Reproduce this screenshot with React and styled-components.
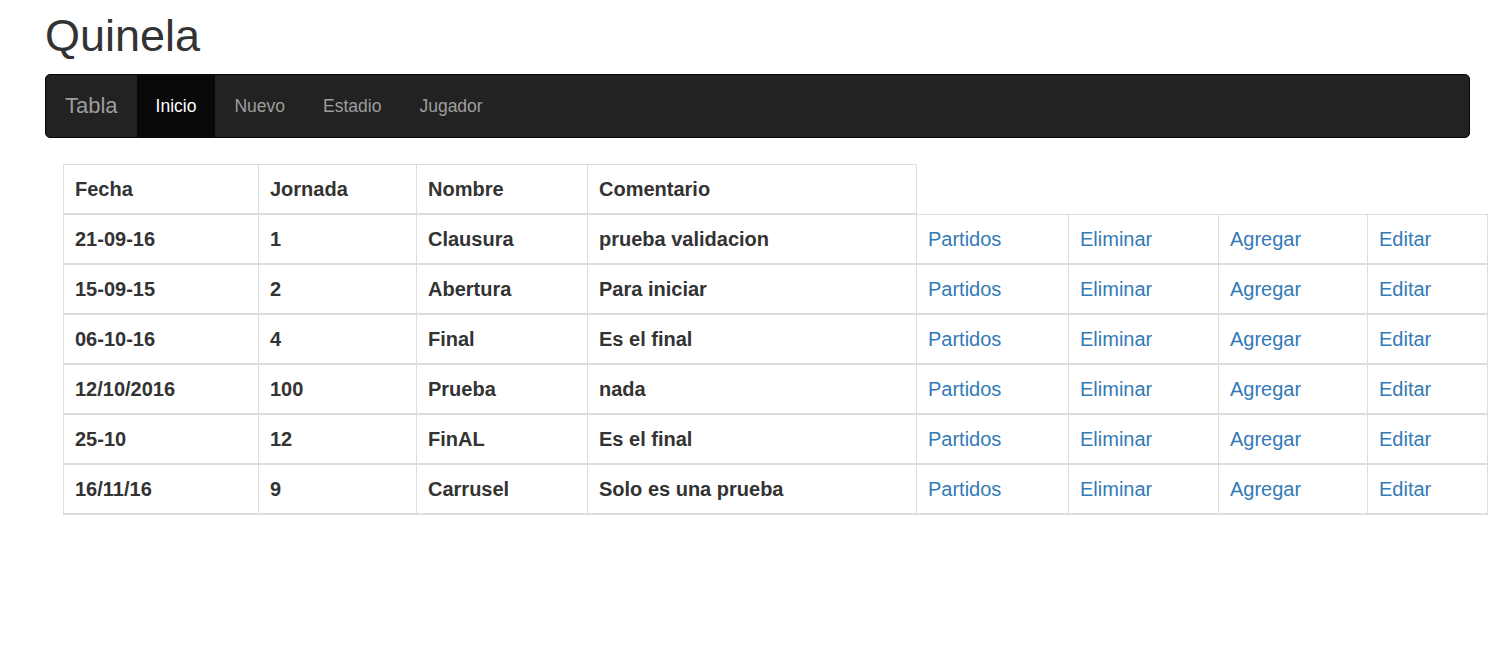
import React from 'react'
import styled, { createGlobalStyle } from 'styled-components'

const GlobalStyle = createGlobalStyle`
  body {
    margin: 0;
    background: #fff;
    color: #333;
    font-family: 'Liberation Sans', Arial, sans-serif;
  }
`

const jornadas = [
  { fecha: '21-09-16', jornada: '1', nombre: 'Clausura', comentario: 'prueba validacion' },
  { fecha: '15-09-15', jornada: '2', nombre: 'Abertura', comentario: 'Para iniciar' },
  { fecha: '06-10-16', jornada: '4', nombre: 'Final', comentario: 'Es el final' },
  { fecha: '12/10/2016', jornada: '100', nombre: 'Prueba', comentario: 'nada' },
  { fecha: '25-10', jornada: '12', nombre: 'FinAL', comentario: 'Es el final' },
  { fecha: '16/11/16', jornada: '9', nombre: 'Carrusel', comentario: 'Solo es una prueba' },
]

const acciones = ['Partidos', 'Eliminar', 'Agregar', 'Editar']
const widths = [195, 158, 171, 329, 152, 150, 149, 120]

const App = () => {
  return (
    <Wrapper>
      <GlobalStyle />
      <Title>Quinela</Title>
      <Navbar>
        <Brand href='#'>Tabla</Brand>
        <NavList>
          <NavItem href='#' $active>
            Inicio
          </NavItem>
          <NavItem href='#'>Nuevo</NavItem>
          <NavItem href='#'>Estadio</NavItem>
          <NavItem href='#'>Jugador</NavItem>
        </NavList>
      </Navbar>
      <Table>
        <colgroup>
          {widths.map((w, i) => (
            <col key={i} style={{ width: w }} />
          ))}
        </colgroup>
        <thead>
          <tr>
            <th>Fecha</th>
            <th>Jornada</th>
            <th>Nombre</th>
            <th>Comentario</th>
          </tr>
        </thead>
        <tbody>
          {jornadas.map((j) => (
            <tr key={j.fecha}>
              <td>{j.fecha}</td>
              <td>{j.jornada}</td>
              <td>{j.nombre}</td>
              <td>{j.comentario}</td>
              {acciones.map((a) => (
                <td key={a}>
                  <ActionLink href='#'>{a}</ActionLink>
                </td>
              ))}
            </tr>
          ))}
        </tbody>
      </Table>
    </Wrapper>
  )
}

const Wrapper = styled.div`
  padding: 11px 0 40px 45px;
`

const Title = styled.h1`
  margin: 0 0 13px 0;
  font-size: 45px;
  line-height: 50px;
  font-weight: 400;
  color: #333;
`

const Navbar = styled.nav`
  display: flex;
  align-items: stretch;
  width: 1425px;
  height: 64px;
  box-sizing: border-box;
  background: #222;
  border: 1px solid #080808;
  border-radius: 5px;
`

const Brand = styled.a`
  display: flex;
  align-items: center;
  padding: 0 19px;
  font-size: 22px;
  color: #9d9d9d;
  text-decoration: none;
`

const NavList = styled.div`
  display: flex;
  align-items: stretch;
`

const NavItem = styled.a`
  display: flex;
  align-items: center;
  padding: 0 19px;
  font-size: 17.5px;
  text-decoration: none;
  color: ${(p) => (p.$active ? '#fff' : '#9d9d9d')};
  background: ${(p) => (p.$active ? '#080808' : 'transparent')};
`

const Table = styled.table`
  margin: 26px 0 0 18px;
  width: 1424px;
  table-layout: fixed;
  border-collapse: collapse;
  border-spacing: 0;
  font-size: 20px;
  line-height: 24px;

  th,
  td {
    padding: 12px 11px;
    text-align: left;
    font-weight: 700;
    color: #333;
    border-left: 1px solid #ddd;
    border-right: 1px solid #ddd;
    white-space: nowrap;
  }

  th {
    border-top: 1px solid #ddd;
    border-bottom: 2px solid #ddd;
  }

  td {
    border-top: 1px solid #ddd;
    border-bottom: 2px solid #ddd;
  }
`

const ActionLink = styled.a`
  font-weight: 400;
  color: #337ab7;
  text-decoration: none;
`

export default App
